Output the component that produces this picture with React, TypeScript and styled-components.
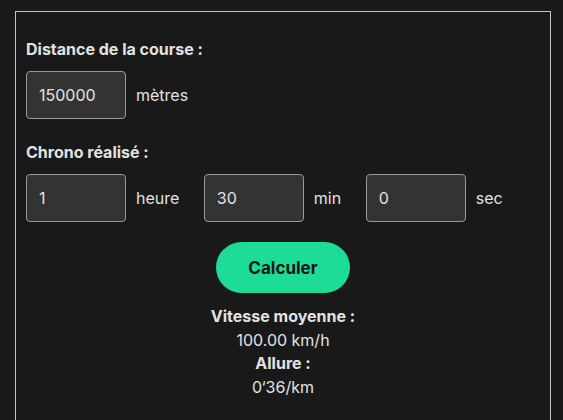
import React, {useState} from 'react';
import styled, {createGlobalStyle} from 'styled-components';

const GlobalStyle = createGlobalStyle`
  html, body {
    margin: 0;
    background: #191919;
    color: #e2e2e2;
    font-family: Inter, "Noto Sans", sans-serif;
  }
`;

const Page = styled.div`
  padding: 11px 12px 0 15px;
`;

const Card = styled.form`
  width: 536px;
  box-sizing: border-box;
  border: 1px solid #c4c4c4;
  border-bottom: none;
  padding: 28px 10px 24px 10px;
  min-height: 420px;
`;

const Label = styled.div`
  font-size: 16px;
  font-weight: 700;
  line-height: 19px;
  margin-bottom: 12px;
`;

const Row = styled.div`
  display: flex;
  align-items: center;
  gap: 24.5px;
  margin-bottom: 24px;
`;

const Field = styled.div`
  display: flex;
  align-items: center;
  gap: 10px;
`;

const Input = styled.input`
  width: 100px;
  height: 48px;
  box-sizing: border-box;
  background: #333333;
  border: 1px solid #9a9a9a;
  border-radius: 4px;
  padding: 0 12px;
  color: #e2e2e2;
  font-family: inherit;
  font-size: 16px;
  outline: none;
`;

const Unit = styled.span`
  font-size: 16px;
  color: #e2e2e2;
`;

const Center = styled.div`
  display: flex;
  flex-direction: column;
  align-items: center;
`;

const Button = styled.button`
  width: 134px;
  height: 51px;
  margin-top: -4px;
  border: none;
  border-radius: 26px;
  background: #1ddc96;
  color: #151515;
  font-family: inherit;
  font-size: 17px;
  font-weight: 700;
  cursor: pointer;
`;

const Results = styled.div`
  margin-top: 12px;
  text-align: center;
  font-size: 16px;
  line-height: 23.5px;
`;

const Strong = styled.div`
  font-weight: 700;
`;

export default function App() {
  const [distance, setDistance] = useState('150000');
  const [h, setH] = useState('1');
  const [m, setM] = useState('30');
  const [s, setS] = useState('0');

  return (
    <Page>
      <GlobalStyle />
      <Card onSubmit={e => e.preventDefault()}>
        <Label>Distance de la course :</Label>
        <Row>
          <Field>
            <Input value={distance} onChange={e => setDistance(e.target.value)} />
            <Unit>mètres</Unit>
          </Field>
        </Row>
        <Label>Chrono réalisé :</Label>
        <Row>
          <Field>
            <Input value={h} onChange={e => setH(e.target.value)} />
            <Unit>heure</Unit>
          </Field>
          <Field>
            <Input value={m} onChange={e => setM(e.target.value)} />
            <Unit>min</Unit>
          </Field>
          <Field>
            <Input value={s} onChange={e => setS(e.target.value)} />
            <Unit>sec</Unit>
          </Field>
        </Row>
        <Center>
          <Button type="submit">Calculer</Button>
          <Results>
            <Strong>Vitesse moyenne :</Strong>
            <div>100.00 km/h</div>
            <Strong>Allure :</Strong>
            <div>0‘36/km</div>
          </Results>
        </Center>
      </Card>
    </Page>
  );
}
